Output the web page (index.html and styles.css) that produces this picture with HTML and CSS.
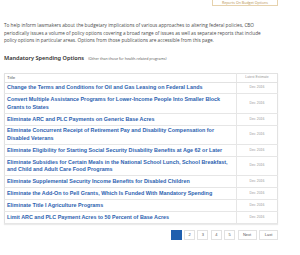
FILE: index.html
```html
<!DOCTYPE html>
<html>
<head>
<meta charset="utf-8">
<link rel="stylesheet" href="styles.css">
</head>
<body>
<div class="page">
  <div class="top">
    <a class="reports-btn">Reports On Budget Options</a>
  </div>
  <p class="intro">To help inform lawmakers about the budgetary implications of various approaches to altering federal policies, CBO periodically issues a volume of policy options covering a broad range of issues as well as separate reports that include policy options in particular areas. Options from those publications are accessible from this page.</p>
  <div class="heading"><span class="main">Mandatory Spending Options</span> <span class="sub">(Other than those for health-related programs)</span></div>
  <table class="options">
    <thead>
      <tr><th class="c-title">Title</th><th class="c-date">Latest Estimate</th></tr>
    </thead>
    <tbody>
      <tr><td class="c-title"><a>Change the Terms and Conditions for Oil and Gas Leasing on Federal Lands</a></td><td class="c-date">Dec 2016</td></tr>
      <tr><td class="c-title"><a>Convert Multiple Assistance Programs for Lower-Income People Into Smaller Block Grants to States</a></td><td class="c-date">Dec 2016</td></tr>
      <tr><td class="c-title"><a>Eliminate ARC and PLC Payments on Generic Base Acres</a></td><td class="c-date">Dec 2016</td></tr>
      <tr><td class="c-title"><a>Eliminate Concurrent Receipt of Retirement Pay and Disability Compensation for Disabled Veterans</a></td><td class="c-date">Dec 2016</td></tr>
      <tr><td class="c-title"><a>Eliminate Eligibility for Starting Social Security Disability Benefits at Age 62 or Later</a></td><td class="c-date">Dec 2016</td></tr>
      <tr><td class="c-title"><a>Eliminate Subsidies for Certain Meals in the National School Lunch, School Breakfast, and Child and Adult Care Food Programs</a></td><td class="c-date">Dec 2016</td></tr>
      <tr><td class="c-title"><a>Eliminate Supplemental Security Income Benefits for Disabled Children</a></td><td class="c-date">Dec 2016</td></tr>
      <tr><td class="c-title"><a>Eliminate the Add-On to Pell Grants, Which Is Funded With Mandatory Spending</a></td><td class="c-date">Dec 2016</td></tr>
      <tr><td class="c-title"><a>Eliminate Title I Agriculture Programs</a></td><td class="c-date">Dec 2016</td></tr>
      <tr><td class="c-title"><a>Limit ARC and PLC Payment Acres to 50 Percent of Base Acres</a></td><td class="c-date">Dec 2016</td></tr>
    </tbody>
  </table>
  <nav class="pager">
    <a class="pg active">1</a>
    <a class="pg">2</a>
    <a class="pg">3</a>
    <a class="pg">4</a>
    <a class="pg">5</a>
    <a class="pg wide">Next</a>
    <a class="pg wide">Last</a>
  </nav>
</div>
</body>
</html>
```
FILE: styles.css
```css
html, body {
  margin: 0;
  padding: 0;
  background: #ffffff;
}
body {
  font-family: "Open Sans", "Noto Sans", sans-serif;
  color: #444444;
}
.page {
  padding: 0 22px 0 4px;
}
.top {
  display: flex;
  justify-content: flex-end;
  margin-top: -4px;
}
.reports-btn {
  display: flex;
  align-items: center;
  justify-content: center;
  width: 66px;
  height: 10px;
  border: 1px solid #e6d2ad;
  color: #b8924f;
  font-size: 3.6px;
  line-height: 4px;
  box-sizing: border-box;
  padding-top: 3px;
}
.intro {
  margin: 16px 0 0 0;
  font-size: 4.7px;
  line-height: 7.7px;
  color: #4a4a4a;
  width: 266px;
}
.heading {
  margin: 5px 0 0 0;
  line-height: 9px;
  color: #333333;
}
.heading .main {
  font-family: "Noto Sans", "Open Sans", sans-serif;
  font-size: 5.6px;
  font-weight: 600;
  color: #2e2e2e;
}
.heading .sub {
  font-size: 3.6px;
  font-weight: 400;
  color: #555555;
}
.options {
  margin-top: 9.5px;
  width: 100%;
  border-collapse: collapse;
  border: 1px solid #e2e2e2;
  box-shadow: 0 1px 1px rgba(0,0,0,0.08);
  font-family: "Liberation Sans", Arial, sans-serif;
  font-size: 5px;
}
.options th {
  font-weight: 400;
  text-align: left;
  height: 8px;
  padding: 0 2px;
  font-size: 4.4px;
  line-height: 5px;
  color: #555;
  border-bottom: 1px solid #e2e2e2;
}
.options th.c-date {
  text-align: center;
  font-size: 3.4px;
  color: #999;
}
.options td {
  padding: 1.7px 2px;
  height: 7.5px;
  line-height: 7.5px;
  border-bottom: 1px solid #e6e6e6;
  vertical-align: middle;
}
.options td.c-title {
  font-size: 5.4px;
}
.options td.c-title a {
  font-weight: 700;
  color: #2c62b0;
}
.options .c-date {
  width: 36px;
  border-left: 1px solid #e6e6e6;
  text-align: center;
  font-size: 3.5px;
  color: #9a9a9a;
}
.pager {
  display: flex;
  justify-content: flex-end;
  gap: 2.4px;
  margin-top: 6px;
}
.pg {
  display: flex;
  align-items: center;
  justify-content: center;
  width: 11px;
  height: 10px;
  box-sizing: border-box;
  border: 1px solid #e2e2e2;
  font-family: "Liberation Sans", Arial, sans-serif;
  font-size: 4px;
  color: #555;
  background: #fff;
}
.pg.wide {
  width: 19px;
}
.pg.active {
  background: #1f5fae;
  border-color: #1f5fae;
  color: #1f5fae;
}
```
